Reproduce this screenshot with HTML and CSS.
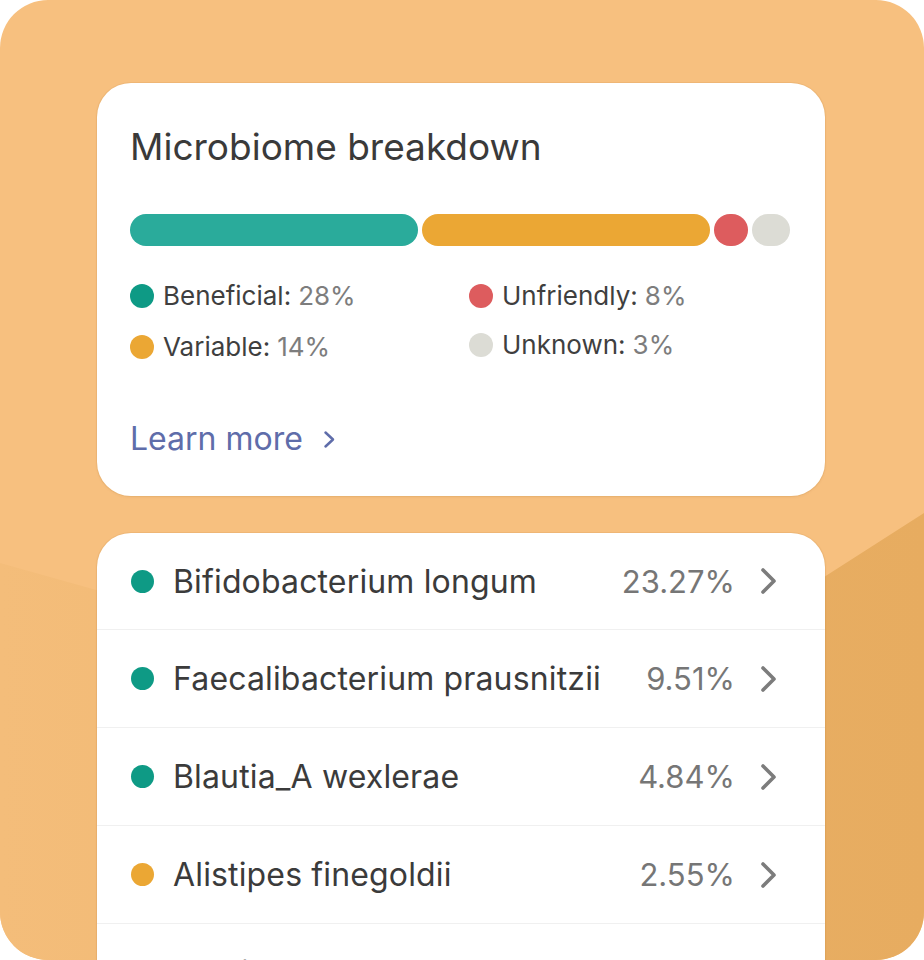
FILE: index.html
```html
<!DOCTYPE html>
<html lang="en">
<head>
<meta charset="utf-8">
<title>Microbiome breakdown</title>
<link rel="stylesheet" href="styles.css">
</head>
<body>
<div class="frame">
  <div class="shade"></div>

  <section class="card summary">
    <h1 class="title">Microbiome breakdown</h1>
    <div class="bar">
      <span class="seg seg-beneficial"></span>
      <span class="seg seg-variable"></span>
      <span class="seg seg-unfriendly"></span>
      <span class="seg seg-unknown"></span>
    </div>
    <ul class="legend">
      <li class="legend-item"><span class="dot dot-beneficial"></span><span class="legend-label">Beneficial:</span><span class="legend-value">28%</span></li>
      <li class="legend-item"><span class="dot dot-unfriendly"></span><span class="legend-label">Unfriendly:</span><span class="legend-value">8%</span></li>
      <li class="legend-item"><span class="dot dot-variable"></span><span class="legend-label">Variable:</span><span class="legend-value">14%</span></li>
      <li class="legend-item legend-item-up"><span class="dot dot-unknown"></span><span class="legend-label">Unknown:</span><span class="legend-value">3%</span></li>
    </ul>
    <a class="learn" href="#">Learn more
      <svg class="learn-chev" width="13" height="19" viewBox="0 0 13 19"><polyline points="2.5,2.5 10,9.5 2.5,16.5" fill="none" stroke="currentColor" stroke-width="2.5" stroke-linecap="round" stroke-linejoin="round"/></svg>
    </a>
  </section>

  <section class="card list">
    <div class="row"><span class="dot row-dot dot-beneficial"></span><span class="name">Bifidobacterium longum</span><span class="pct">23.27%</span><svg class="chev" width="17" height="28" viewBox="0 0 17 28"><polyline points="3,3 14,14 3,25" fill="none" stroke="currentColor" stroke-width="3.6" stroke-linecap="round" stroke-linejoin="round"/></svg></div>
    <div class="row"><span class="dot row-dot dot-beneficial"></span><span class="name">Faecalibacterium prausnitzii</span><span class="pct">9.51%</span><svg class="chev" width="17" height="28" viewBox="0 0 17 28"><polyline points="3,3 14,14 3,25" fill="none" stroke="currentColor" stroke-width="3.6" stroke-linecap="round" stroke-linejoin="round"/></svg></div>
    <div class="row"><span class="dot row-dot dot-beneficial"></span><span class="name">Blautia_A wexlerae</span><span class="pct">4.84%</span><svg class="chev" width="17" height="28" viewBox="0 0 17 28"><polyline points="3,3 14,14 3,25" fill="none" stroke="currentColor" stroke-width="3.6" stroke-linecap="round" stroke-linejoin="round"/></svg></div>
    <div class="row"><span class="dot row-dot dot-variable"></span><span class="name">Alistipes finegoldii</span><span class="pct">2.55%</span><svg class="chev" width="17" height="28" viewBox="0 0 17 28"><polyline points="3,3 14,14 3,25" fill="none" stroke="currentColor" stroke-width="3.6" stroke-linecap="round" stroke-linejoin="round"/></svg></div>
    <div class="row"><span class="dot row-dot dot-beneficial"></span><span class="name">Ruminococcus gnavus</span><span class="pct">2.13%</span><svg class="chev" width="17" height="28" viewBox="0 0 17 28"><polyline points="3,3 14,14 3,25" fill="none" stroke="currentColor" stroke-width="3.6" stroke-linecap="round" stroke-linejoin="round"/></svg></div>
  </section>
</div>
</body>
</html>
```

FILE: styles.css
```css
* { box-sizing: border-box; }

html, body {
  margin: 0;
  padding: 0;
  background: #ffffff;
}

body {
  font-family: Inter, "Noto Sans", "Liberation Sans", sans-serif;
  width: 924px;
  height: 960px;
  overflow: hidden;
}

.frame {
  position: relative;
  width: 924px;
  height: 960px;
  border-radius: 48px;
  overflow: hidden;
  background: #F7C07F;
  padding: 83px 99px 0 97px;
  display: flex;
  flex-direction: column;
  gap: 37px;
}

.shade {
  position: absolute;
  inset: 0;
  background: linear-gradient(90deg, #F4BD7A 0%, #F0B871 45%, #E8AE63 75%, #E7AC60 100%);
  clip-path: polygon(0 563px, 588px 728px, 924px 513px, 924px 960px, 0 960px);
}

.card {
  position: relative;
  background: #ffffff;
  border-radius: 34px;
  box-shadow: 0 0 0 1px rgba(190, 130, 60, 0.12), 0 1px 3px rgba(120, 70, 10, 0.08);
  flex-shrink: 0;
}

.summary {
  padding: 41px 33px 37px 33px;
}

.title {
  margin: 0;
  font-size: 37px;
  line-height: 45px;
  font-weight: 400;
  color: #3a3a3a;
  letter-spacing: 0;
}

.bar {
  margin-top: 45px;
  display: flex;
  gap: 4px;
  height: 32px;
}

.seg {
  display: block;
  height: 32px;
  border-radius: 16px;
}

.seg-beneficial { flex: 0 0 288px; background: #2AAB9B; }
.seg-variable { flex: 0 0 288px; background: #EBA734; }
.seg-unfriendly { flex: 0 0 34px; background: #DD5C5E; }
.seg-unknown { flex: 0 0 38px; background: #DCDCD5; }

.legend {
  list-style: none;
  margin: 32px 0 0 0;
  padding: 0;
  display: grid;
  grid-template-columns: 339px 1fr;
  row-gap: 15px;
}

.legend-item {
  display: flex;
  align-items: center;
  height: 36px;
  font-size: 26px;
  line-height: 36px;
}

.legend-item-up {
  margin-top: -2px;
}

.dot {
  display: inline-block;
  width: 24px;
  height: 24px;
  border-radius: 50%;
  flex-shrink: 0;
}

.dot-beneficial { background: #0E9A85; }
.dot-variable { background: #EBA734; }
.dot-unfriendly { background: #DD5C5E; }
.dot-unknown { background: #DCDCD5; }

.legend-label {
  margin-left: 9px;
  color: #3f3f3f;
}

.legend-value {
  margin-left: 7px;
  color: #7d7d7d;
}

.learn {
  margin-top: 54px;
  display: flex;
  align-items: center;
  gap: 20px;
  font-size: 32px;
  line-height: 40px;
  color: #5F6DAA;
  text-decoration: none;
}

.learn-chev {
  display: block;
  margin-top: 1px;
}

.list {
  border-radius: 34px 34px 0 0;
  padding: 0;
}

.row {
  display: flex;
  align-items: center;
  height: 98px;
  padding: 0 48px 0 34px;
  border-bottom: 1px solid #F0F0F0;
}

.row:first-child {
  height: 97px;
}

.row-dot {
  width: 23px;
  height: 23px;
}

.name {
  margin-left: 19px;
  flex: 1;
  font-size: 32px;
  letter-spacing: 0.15px;
  color: #3b3b3b;
  white-space: nowrap;
}

.pct {
  font-size: 31px;
  color: #767676;
  white-space: nowrap;
}

.chev {
  display: block;
  margin-left: 25px;
  color: #7c7c7c;
}
```
